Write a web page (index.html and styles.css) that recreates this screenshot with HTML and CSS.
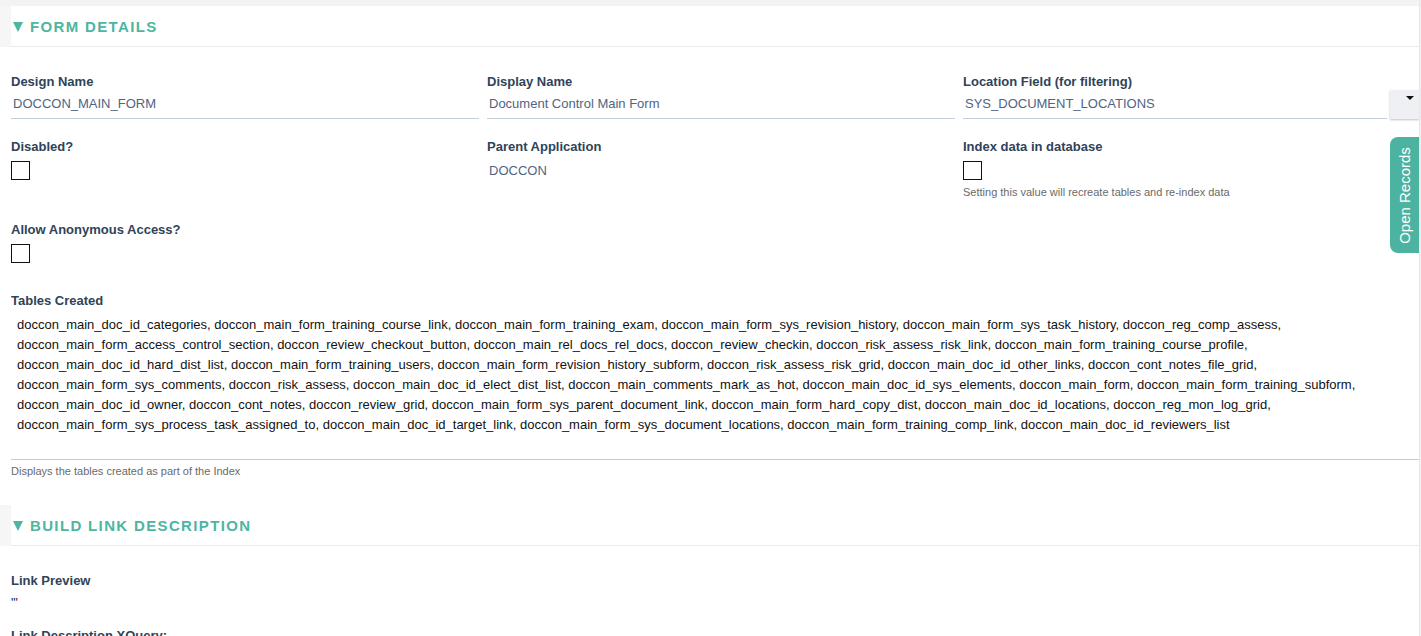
FILE: index.html
```html
<!DOCTYPE html>
<html lang="en">
<head>
  <meta charset="UTF-8">
  <meta name="viewport" content="width=device-width, initial-scale=1.0">
  <title>Form Details</title>
  <link rel="stylesheet" href="styles.css">
</head>
<body>
  <div class="page">
    <div class="main">
      <div class="topband"></div>

      <!-- Form Details -->
      <div class="section">
        <div class="section-head">
          <div class="section-title"><span class="caret"></span>FORM DETAILS</div>
        </div>
        <div class="section-body">
          <div class="form-grid">
            <div class="field">
              <div class="label">Design Name</div>
              <div class="input">DOCCON_MAIN_FORM</div>
            </div>
            <div class="field">
              <div class="label">Display Name</div>
              <div class="input">Document Control Main Form</div>
            </div>
            <div class="field">
              <div class="label">Location Field (for filtering)</div>
              <div class="select-row">
                <div class="input">SYS_DOCUMENT_LOCATIONS</div>
                <div class="select-btn"><span class="arrow"></span></div>
              </div>
            </div>

            <div class="field">
              <div class="label">Disabled?</div>
              <span class="checkbox"></span>
            </div>
            <div class="field">
              <div class="label">Parent Application</div>
              <div class="static">DOCCON</div>
            </div>
            <div class="field">
              <div class="label">Index data in database</div>
              <span class="checkbox"></span>
              <div class="hint">Setting this value will recreate tables and re-index data</div>
            </div>

            <div class="field field-spaced">
              <div class="label">Allow Anonymous Access?</div>
              <span class="checkbox"></span>
            </div>

            <div class="field field-wide">
              <div class="label">Tables Created</div>
              <div class="tables">doccon_main_doc_id_categories, doccon_main_form_training_course_link, doccon_main_form_training_exam, doccon_main_form_sys_revision_history, doccon_main_form_sys_task_history, doccon_reg_comp_assess, doccon_main_form_access_control_section, doccon_review_checkout_button, doccon_main_rel_docs_rel_docs, doccon_review_checkin, doccon_risk_assess_risk_link, doccon_main_form_training_course_profile, doccon_main_doc_id_hard_dist_list, doccon_main_form_training_users, doccon_main_form_revision_history_subform, doccon_risk_assess_risk_grid, doccon_main_doc_id_other_links, doccon_cont_notes_file_grid, doccon_main_form_sys_comments, doccon_risk_assess, doccon_main_doc_id_elect_dist_list, doccon_main_comments_mark_as_hot, doccon_main_doc_id_sys_elements, doccon_main_form, doccon_main_form_training_subform, doccon_main_doc_id_owner, doccon_cont_notes, doccon_review_grid, doccon_main_form_sys_parent_document_link, doccon_main_form_hard_copy_dist, doccon_main_doc_id_locations, doccon_reg_mon_log_grid, doccon_main_form_sys_process_task_assigned_to, doccon_main_doc_id_target_link, doccon_main_form_sys_document_locations, doccon_main_form_training_comp_link, doccon_main_doc_id_reviewers_list</div>
              <div class="hint hint-tables">Displays the tables created as part of the Index</div>
            </div>
          </div>
        </div>
      </div>

      <!-- Build Link Description -->
      <div class="section">
        <div class="section-head">
          <div class="section-title"><span class="caret"></span>BUILD LINK DESCRIPTION</div>
        </div>
        <div class="section-body">
          <div class="field">
            <div class="label">Link Preview</div>
            <div class="preview">'''</div>
          </div>
          <div class="field">
            <div class="label">Link Description XQuery:</div>
          </div>
        </div>
      </div>
    </div>
    <div class="edge"></div>
  </div>

  <div class="open-records"><span>Open Records</span></div>
</body>
</html>
```

FILE: styles.css
```css
body {
  font-family: "Liberation Sans", Arial, sans-serif;
  background: #fff;
  color: #000;
  margin: 0;
  padding: 0;
  overflow: hidden;
}
.page {
  display: flex;
  height: 636px;
}
.main {
  flex: 1;
  overflow: hidden;
}
.edge {
  width: 2px;
  background: linear-gradient(to right, #e4e4e4, #f3f3f3);
}
.topband {
  height: 6px;
  background: #f3f3f3;
}
.section-head {
  background: #f6f6f6;
}
.section-title {
  margin-left: 11px;
  height: 40px;
  background: #fff;
  border-bottom: 1px solid #ebebeb;
  display: flex;
  align-items: center;
  color: #4db5a0;
  font-size: 15px;
  font-weight: bold;
  letter-spacing: 1.35px;
}
.caret {
  width: 0;
  height: 0;
  margin: 1px 7px 0 2px;
  border-left: 5.5px solid transparent;
  border-right: 5.5px solid transparent;
  border-top: 10px solid #4db5a0;
}
.section-body {
  padding: 27px 0 27px 11px;
}
.form-grid {
  display: grid;
  grid-template-columns: 468px 468px 1fr;
  column-gap: 8px;
  row-gap: 20px;
}
.field-wide {
  grid-column: 1 / 4;
}
.label {
  font-size: 13px;
  font-weight: bold;
  line-height: 16px;
  color: #2f4359;
}
.input {
  height: 28px;
  line-height: 28px;
  padding-left: 2px;
  font-size: 13px;
  color: #4e6585;
  border-bottom: 1px solid #c5cfdb;
}
.select-row {
  display: flex;
  align-items: flex-start;
}
.select-row .input {
  flex: 1;
}
.select-btn {
  width: 29px;
  height: 29px;
  margin-left: 3px;
  background: #eef0f3;
  box-shadow: 0 1px 2px rgba(0, 0, 0, 0.25);
  display: flex;
  justify-content: flex-end;
  padding: 6px 5px 0 0;
  box-sizing: border-box;
}
.arrow {
  width: 0;
  height: 0;
  border-left: 4px solid transparent;
  border-right: 4px solid transparent;
  border-top: 4px solid #111;
}
.static {
  padding-top: 4px;
  line-height: 24px;
  padding-left: 2px;
  font-size: 13px;
  color: #4e6585;
}
.checkbox {
  display: block;
  width: 17px;
  height: 17px;
  margin-top: 6px;
  border: 1px solid #111;
  background: #fff;
}
.field-spaced .checkbox {
  margin-bottom: 10px;
}
.hint {
  margin: 5px 0 3px;
  font-size: 11px;
  line-height: 14px;
  color: #6a6a6a;
}
.tables {
  margin-top: 6px;
  padding: 0 6px 24px;
  font-size: 13px;
  line-height: 20px;
  color: #111;
  border-bottom: 1px solid #c9cad1;
}
.hint-tables {
  margin: 4px 0 0;
}
.preview {
  line-height: 28px;
  font-size: 12px;
  color: #111;
  margin-bottom: 11px;
}
.open-records {
  position: fixed;
  right: 2px;
  top: 137px;
  width: 29px;
  height: 116px;
  background: #4db3a1;
  border-radius: 8px 0 0 8px;
  display: flex;
  align-items: center;
  justify-content: center;
}
.open-records span {
  transform: rotate(-90deg);
  white-space: nowrap;
  color: #fff;
  font-size: 15px;
}
```
